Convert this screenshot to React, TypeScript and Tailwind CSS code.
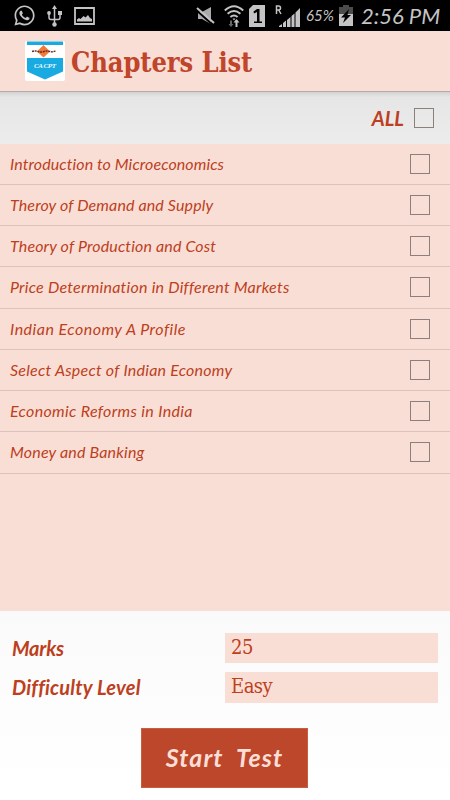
import type { FC } from "react";
import clsx from "clsx";
import { FaWhatsapp } from "react-icons/fa";

interface Chapter {
  title: string;
  tracking: string;
}

const chapters: Chapter[] = [
  { title: "Introduction to Microeconomics", tracking: "tracking-[0.1px]" },
  { title: "Theroy of Demand and Supply", tracking: "tracking-[0.13px]" },
  { title: "Theory of Production and Cost", tracking: "tracking-[0.15px]" },
  { title: "Price Determination in Different Markets", tracking: "tracking-[0.24px]" },
  { title: "Indian Economy A Profile", tracking: "tracking-[0.49px]" },
  { title: "Select Aspect of Indian Economy", tracking: "tracking-[0.24px]" },
  { title: "Economic Reforms in India", tracking: "tracking-[0.34px]" },
  { title: "Money and Banking", tracking: "tracking-[0.18px]" },
];

const Checkbox: FC = () => (
  <span
    role="checkbox"
    aria-checked="false"
    className="block size-5 shrink-0 border border-[#8c7f7c]"
  />
);

const StatusBar: FC = () => (
  <div className="flex h-[31px] shrink-0 items-center bg-black pl-[13px] text-[#c4c4c4]">
    <FaWhatsapp className="size-[23px]" />
    {/* USB */}
    <svg className="ml-[11px] h-[22px] w-[15px]" viewBox="0 0 15 22" fill="none" stroke="currentColor" strokeWidth="1.5">
      <path d="M7.5 3v16M2 9v3.5q0 2 2 2h7q2 0 2-2V9" />
      <path d="M7.5 0l2.5 4H5z" fill="currentColor" stroke="none" />
      <circle cx="2" cy="8" r="1.9" fill="currentColor" stroke="none" />
      <path d="M11 6h4v4h-4z" fill="currentColor" stroke="none" />
      <circle cx="7.5" cy="19.5" r="2.2" fill="currentColor" stroke="none" />
    </svg>
    {/* Gallery */}
    <svg className="ml-3 h-[18px] w-[21px]" viewBox="0 0 21 18" fill="none">
      <path d="M1 1h19v16H1z" stroke="currentColor" strokeWidth="1.8" />
      <path d="M3 14.5v-2l2-1.5 1.5 1 3-3 2 1.5L14 8l2 3 2 1v2.5z" fill="currentColor" />
    </svg>
    {/* Muted */}
    <svg className="ml-[101px] h-[18px] w-[20px]" viewBox="0 0 20 18">
      <path d="M2 5h4l9-5v17l-9-5H2z" fill="#aaa" />
      <path d="M0 3l17 15" stroke="#000" strokeWidth="2" />
      <path d="M1 1l17 15" stroke="currentColor" strokeWidth="2" />
    </svg>
    {/* Wifi */}
    <svg className="ml-[8px] h-[22px] w-[20px]" viewBox="0 0 20 22" fill="none" stroke="currentColor" strokeWidth="2">
      <path d="M.8 5.500q9.200-8.500 18.400 0M3.600 8.800q6.400-5.500 12.800 0M6.400 12q3.600-3 7.200 0" />
      <path d="M8.500 13.500h3L10 15.500z" fill="currentColor" stroke="none" />
      <path d="M6 15.500h2V19h1.500L7 22l-2.500-3H6z" fill="#666" stroke="none" />
      <path d="M11.500 22v-4.500H9.500L12.500 14l3 3.500h-2V22z" fill="currentColor" stroke="none" />
    </svg>
    {/* SIM slot */}
    <svg className="ml-[5px] h-[22px] w-[16px]" viewBox="0 0 16 22">
      <path d="M4 0h12v22H0V4z" fill="currentColor" />
      <path d="M4.500 6.500L8 4h2.500v12.500H13V18H5v-1.500h3V7L5 8.500z" fill="#000" />
    </svg>
    {/* Signal */}
    <svg className="ml-[10px] h-[24px] w-[25px]" viewBox="0 0 25 24" fill="none">
      <path d="M1.500 10V2h2q2 0 2 2t-2 2h-2M3.700 6L6 10" stroke="currentColor" strokeWidth="1.500" />
      <path d="M4 23v-1l3-2v3zM8 23v-4l3-2.500V23zM12 23v-7l3.500-3v10zM16.500 23V12l3-2.500V23zM20.500 23V8.500L25 4v19z" fill="currentColor" />
    </svg>
    <span className="ml-[6px] w-[33px] whitespace-nowrap font-['Lato',sans-serif] text-[15px] italic">65%</span>
    {/* Battery */}
    <svg className="h-[21px] w-[14px]" viewBox="0 0 14 21">
      <path d="M4 0h6v2h4v7H0V2h4z" fill="#4c4c4c" />
      <path d="M0 9h14v12H0z" fill="currentColor" />
      <path d="M10 4L2 12.500h4L4 18l8-8H8.500z" fill="#000" />
    </svg>
    <span className="ml-[8px] whitespace-nowrap font-['Lato',sans-serif] text-[22px] italic">2:56 PM</span>
  </div>
);

const AppLogo: FC = () => (
  <svg className="size-10 shrink-0" viewBox="0 0 40 40">
    <rect width="40" height="40" rx="2" fill="#fff" />
    <path d="M2 .5h36V4H2zM2 17h36v13.500L20 38.500 2 30.500z" fill="#19aae1" />
    <path d="M18.500 4l6.500 6.500-6.500 6L12 10.500z" fill="#f47938" />
    <path d="M7 10.500q3-1 6 0t6 0 6 0 6-1" stroke="#652b24" strokeWidth="1.400" strokeDasharray="2 .7" fill="none" />
    <text x="20" y="27" textAnchor="middle" fill="#e8faff" fontSize="7" fontStyle="italic" fontWeight="bold" fontFamily="Liberation Serif, serif" textLength="22">
      CA CPT
    </text>
  </svg>
);

const Field: FC<{ label: string; value: string; labelClass: string }> = ({ label, value, labelClass }) => (
  <div className="flex h-[30.500px] items-center">
    <span className={clsx("w-[213px] shrink-0 whitespace-nowrap font-['Lato',sans-serif] text-[20px] font-bold italic", labelClass)}>
      {label}
    </span>
    <span className="h-full w-[212.500px] bg-[#f9ded6] pl-[6px] font-['DejaVu_Serif_Condensed','DejaVu_Serif',serif] text-[20px] leading-[29px] tracking-[-0.5px]">
      {value}
    </span>
  </div>
);

export default function App() {
  return (
    <div className="flex h-[800px] w-[450px] flex-col overflow-hidden bg-[#f9ded6] text-[#bd3f20]">
      <StatusBar />

      <header className="flex h-[60px] shrink-0 items-center gap-[6px] pl-[25px]">
        <AppLogo />
        <h1 className="pt-1 whitespace-nowrap font-['DejaVu_Serif_Condensed','DejaVu_Serif',serif] text-[27px] font-bold tracking-[-0.1px] text-[#c0452a]">
          Chapters List
        </h1>
      </header>

      {/* Select all */}
      <div className="flex h-[52.500px] shrink-0 items-center justify-end gap-[10px] border-t border-[#b5aaa7] bg-linear-to-b from-[#d2d2d2] via-[#e6e6e6] via-10% to-[#ececec] pr-4">
        <span className="font-['Lato',sans-serif] text-[20px] font-bold italic">ALL</span>
        <Checkbox />
      </div>

      <ul className="shrink-0">
        {chapters.map((chapter) => (
          <li
            key={chapter.title}
            className="flex h-[41.250px] items-center justify-between border-b border-[#dcc3bc] pr-5 pl-[10px]"
          >
            <span className={clsx("whitespace-nowrap font-['Lato',sans-serif] text-[16px] italic", chapter.tracking)}>
              {chapter.title}
            </span>
            <Checkbox />
          </li>
        ))}
      </ul>

      <footer className="mt-auto flex h-[189px] shrink-0 flex-col bg-linear-to-b from-[#fafafa] to-white pt-[21.500px] pl-3">
        <div className="flex flex-col gap-[9px]">
          <Field label="Marks" value="25" labelClass="tracking-[-0.2px]" />
          <Field label="Difficulty Level" value="Easy" labelClass="tracking-[0.2px]" />
        </div>
        <button className="mt-[25px] ml-[129px] h-[60px] w-[167px] border border-[#c95d42] bg-[#bd472b] font-['Lato',sans-serif] text-[25px] font-bold tracking-[1.1px] whitespace-pre text-[#fbded6] italic">
          Start  Test
        </button>
      </footer>
    </div>
  );
}
